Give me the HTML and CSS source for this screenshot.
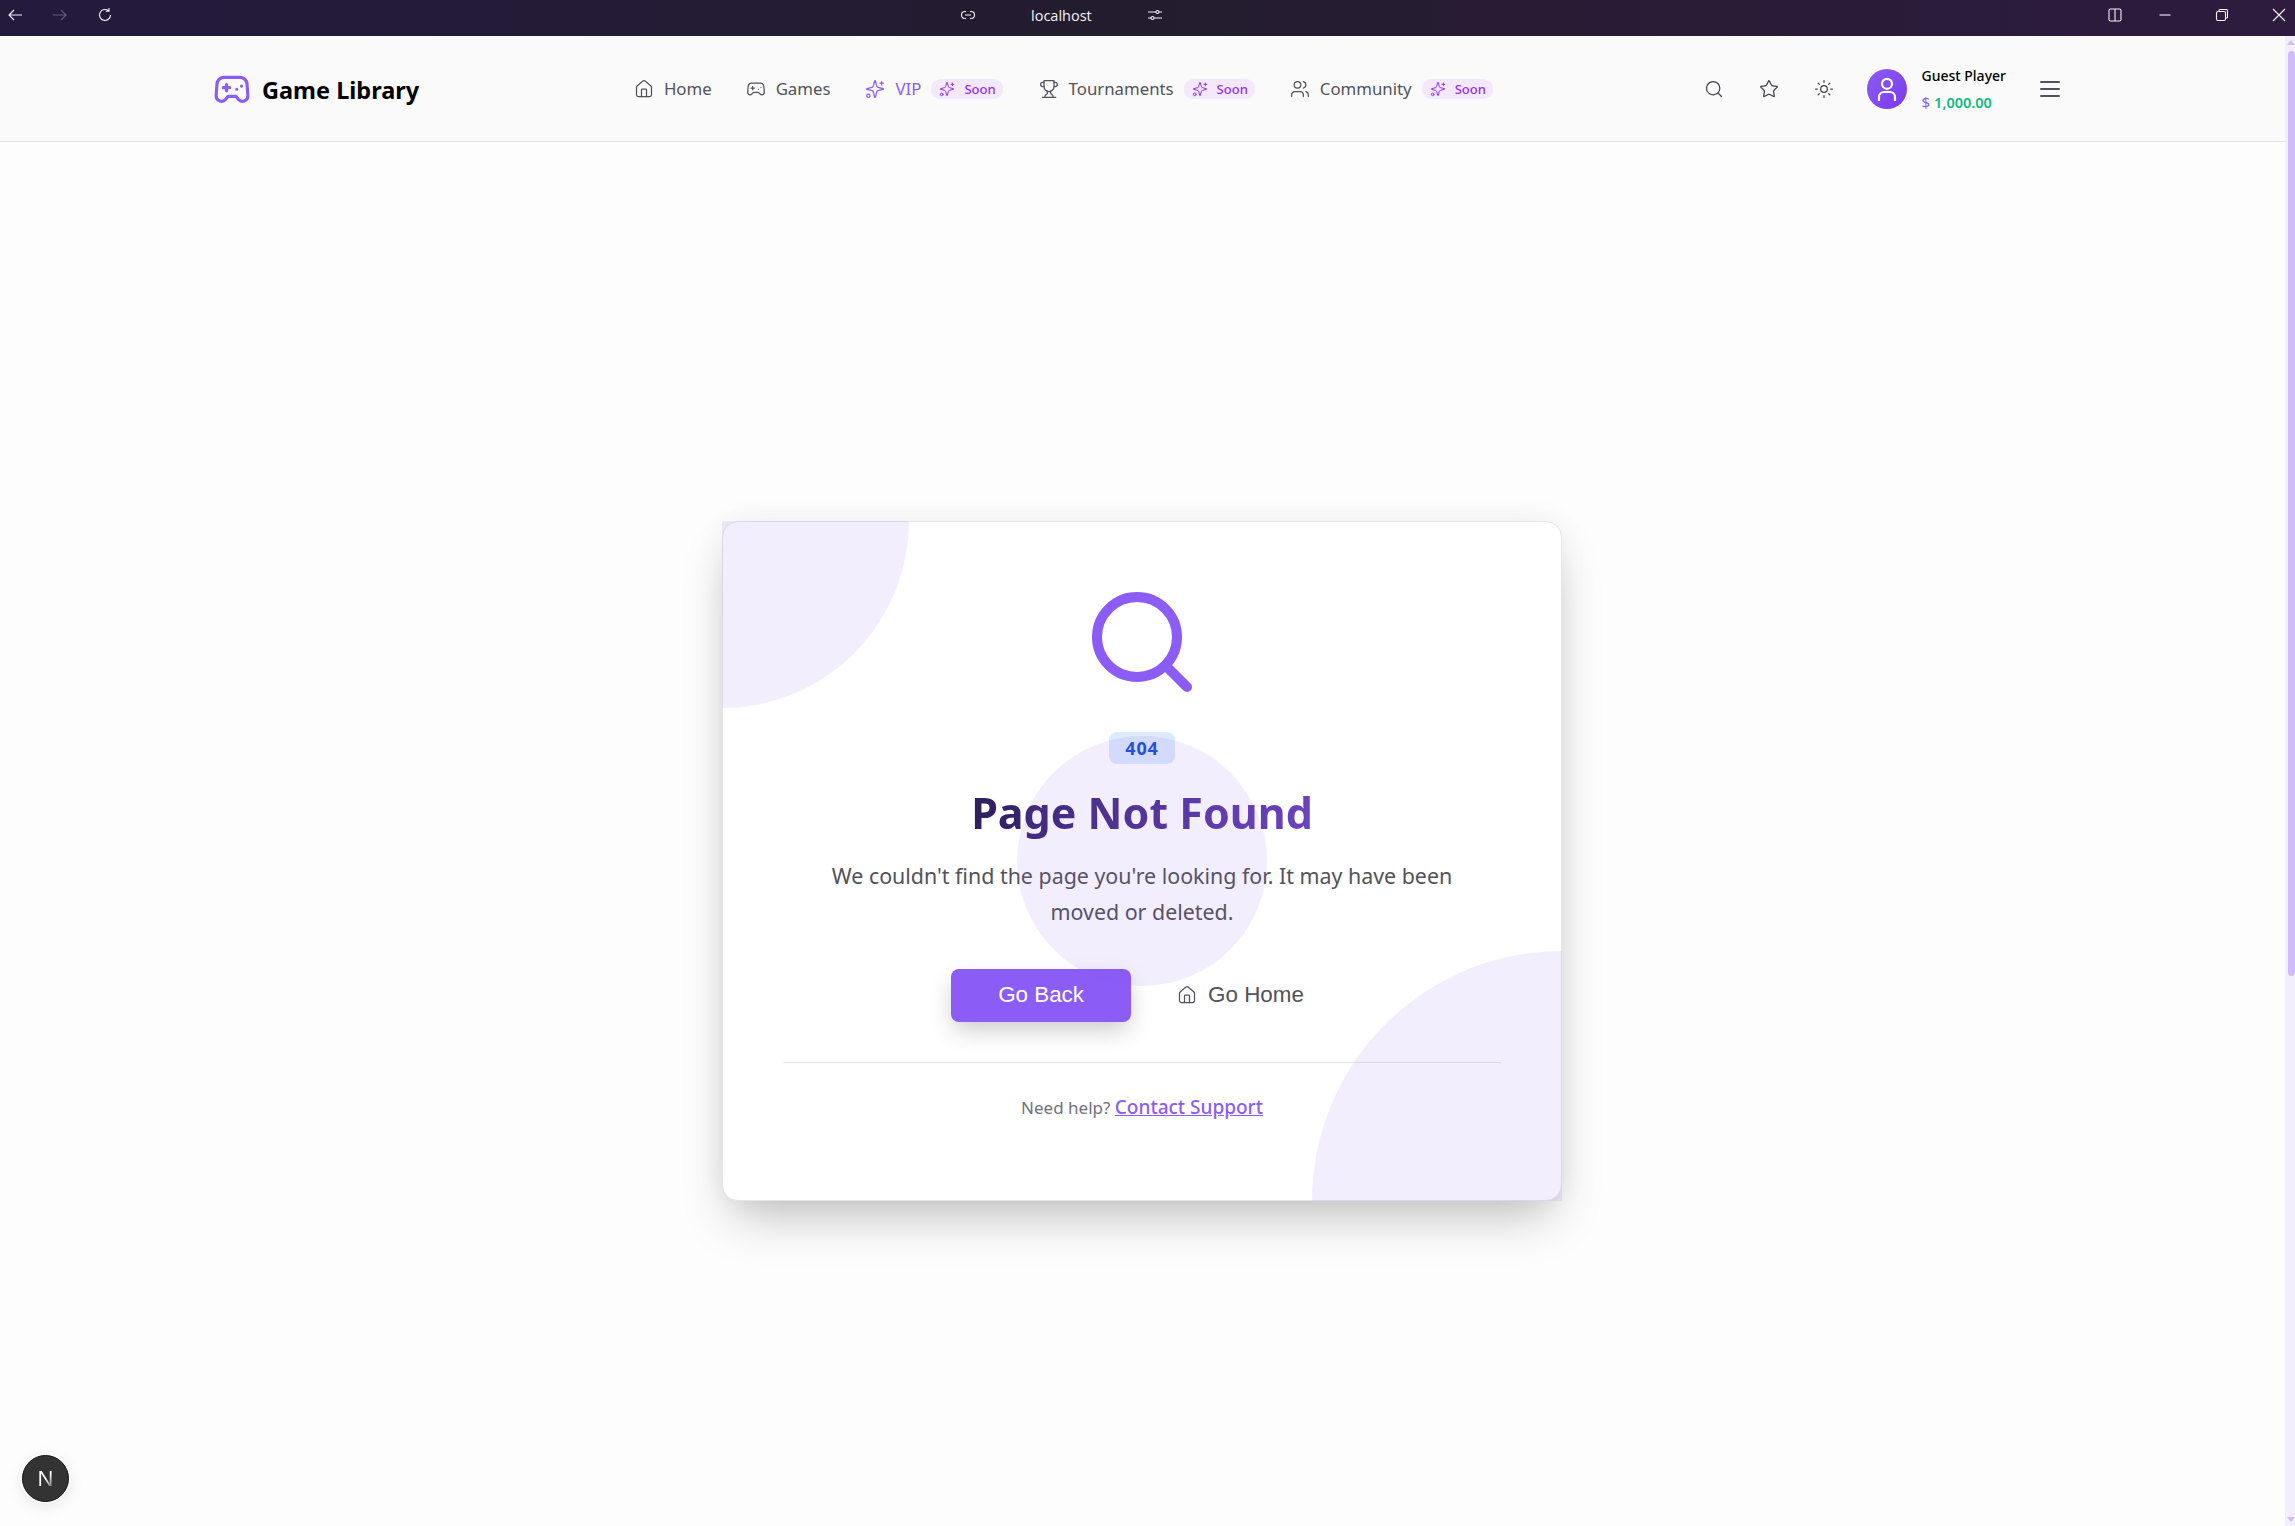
FILE: index.html
```html
<!DOCTYPE html>
<html lang="en">
<head>
    <meta charset="UTF-8">
    <meta name="viewport" content="width=device-width, initial-scale=1.0">
    <title>Page Not Found - Game Library</title>
    <link rel="stylesheet" href="styles.css">
</head>
<body>

    <!-- browser chrome -->
    <div class="titlebar">
        <div class="chrome-nav">
            <svg class="chrome-icon" viewBox="0 0 16 16"><path d="M15 8H2M7 3L2 8l5 5"/></svg>
            <svg class="chrome-icon dim" viewBox="0 0 16 16"><path d="M1 8h13M9 3l5 5-5 5"/></svg>
            <svg class="chrome-icon" viewBox="0 0 16 16"><path d="M13.5 8A5.5 5.5 0 1 1 11.6 3.8M12 1v3.2H8.8"/></svg>
        </div>
        <div class="chrome-address">
            <svg class="chrome-icon" viewBox="0 0 16 16"><path d="M6 4.500H5a3.500 3.500 0 0 0 0 7h1M10 4.500h1a3.500 3.500 0 0 1 0 7h-1M5 8h6"/></svg>
            <span class="chrome-url">localhost</span>
            <svg class="chrome-icon" viewBox="0 0 16 16"><path d="M1 5h8M12 5h3M1 11h3M7 11h8"/><circle cx="10.500" cy="5" r="1.500"/><circle cx="5.500" cy="11" r="1.500"/></svg>
        </div>
        <div class="chrome-window">
            <svg class="chrome-icon panel-icon" viewBox="0 0 16 16"><rect x="2" y="2" width="12" height="12" rx="1.500"/><path d="M8 2v12"/></svg>
            <svg class="chrome-icon" viewBox="0 0 16 16"><path d="M2.500 8h11"/></svg>
            <svg class="chrome-icon" viewBox="0 0 16 16"><rect x="2.500" y="4.500" width="9" height="9" rx="1.500"/><path d="M5 4.500V3.500a1 1 0 0 1 1-1h6.500a1 1 0 0 1 1 1V10a1 1 0 0 1-1 1h-1"/></svg>
            <svg class="chrome-icon" viewBox="0 0 16 16"><path d="M2 2l12 12M14 2L2 14"/></svg>
        </div>
    </div>

    <div class="viewport">
        <div class="page">
            <header class="site-header">
                <a class="logo">
                    <svg class="logo-icon" viewBox="0 0 24 24"><path d="M7 4h10a4.500 4.500 0 0 1 4.500 4.200l.5 7.300a3.400 3.400 0 0 1-6 2.400L14.500 16h-5L8 17.900a3.400 3.400 0 0 1-6-2.400l.5-7.300A4.500 4.500 0 0 1 7 4z"/><path d="M6.500 10.500h4M8.500 8.500v4M15 11.500h.01M18 9.500h.01"/></svg>
                    <span class="logo-text">Game Library</span>
                </a>

                <nav class="main-nav">
                    <a class="nav-item">
                        <svg class="icon" viewBox="0 0 24 24"><path d="M15 21v-8a1 1 0 0 0-1-1h-4a1 1 0 0 0-1 1v8"/><path d="M3 10a2 2 0 0 1 .709-1.528l7-5.999a2 2 0 0 1 2.582 0l7 5.999A2 2 0 0 1 21 10v9a2 2 0 0 1-2 2H5a2 2 0 0 1-2-2z"/></svg>
                        Home
                    </a>
                    <a class="nav-item">
                        <svg class="icon" viewBox="0 0 24 24"><path d="M6 11h4M8 9v4M15 12h.01M18 10h.01"/><path d="M17.320 5H6.680a4 4 0 0 0-3.978 3.590c-.006.052-.01.101-.017.152C2.604 9.416 2 14.456 2 16a3 3 0 0 0 3 3c1 0 1.500-.500 2-1l1.414-1.414A2 2 0 0 1 9.828 16h4.344a2 2 0 0 1 1.414.586L17 18c.500.500 1 1 2 1a3 3 0 0 0 3-3c0-1.545-.604-6.584-.685-7.258-.007-.05-.011-.1-.017-.151A4 4 0 0 0 17.320 5z"/></svg>
                        Games
                    </a>
                    <a class="nav-item vip">
                        <svg class="icon" viewBox="0 0 24 24"><path d="M9.937 15.500A2 2 0 0 0 8.500 14.063l-6.135-1.582a.5.5 0 0 1 0-.962L8.500 9.936A2 2 0 0 0 9.937 8.500l1.582-6.135a.5.5 0 0 1 .963 0L14.063 8.500A2 2 0 0 0 15.500 9.937l6.135 1.581a.5.5 0 0 1 0 .964L15.500 14.063a2 2 0 0 0-1.437 1.437l-1.582 6.135a.5.5 0 0 1-.963 0z"/><path d="M20 3v4M22 5h-4"/><circle cx="4" cy="20" r="2"/></svg>
                        VIP
                        <span class="soon-badge">
                            <svg class="icon-small" viewBox="0 0 24 24"><path d="M9.937 15.500A2 2 0 0 0 8.500 14.063l-6.135-1.582a.5.5 0 0 1 0-.962L8.500 9.936A2 2 0 0 0 9.937 8.500l1.582-6.135a.5.5 0 0 1 .963 0L14.063 8.500A2 2 0 0 0 15.500 9.937l6.135 1.581a.5.5 0 0 1 0 .964L15.500 14.063a2 2 0 0 0-1.437 1.437l-1.582 6.135a.5.5 0 0 1-.963 0z"/><path d="M20 3v4M22 5h-4"/><circle cx="4" cy="20" r="2"/></svg>
                            Soon
                        </span>
                    </a>
                    <a class="nav-item tournaments">
                        <svg class="icon" viewBox="0 0 24 24"><path d="M6 9H4.500a2.500 2.500 0 0 1 0-5H6"/><path d="M18 9h1.500a2.500 2.500 0 0 0 0-5H18"/><path d="M4 22h16"/><path d="M10 14.660V17c0 .55-.47.98-.97 1.210C7.850 18.750 7 20.240 7 22"/><path d="M14 14.660V17c0 .55.47.98.97 1.210C16.150 18.750 17 20.240 17 22"/><path d="M18 2H6v7a6 6 0 0 0 12 0V2Z"/></svg>
                        Tournaments
                        <span class="soon-badge">
                            <svg class="icon-small" viewBox="0 0 24 24"><path d="M9.937 15.500A2 2 0 0 0 8.500 14.063l-6.135-1.582a.5.5 0 0 1 0-.962L8.500 9.936A2 2 0 0 0 9.937 8.500l1.582-6.135a.5.5 0 0 1 .963 0L14.063 8.500A2 2 0 0 0 15.500 9.937l6.135 1.581a.5.5 0 0 1 0 .964L15.500 14.063a2 2 0 0 0-1.437 1.437l-1.582 6.135a.5.5 0 0 1-.963 0z"/><path d="M20 3v4M22 5h-4"/><circle cx="4" cy="20" r="2"/></svg>
                            Soon
                        </span>
                    </a>
                    <a class="nav-item">
                        <svg class="icon" viewBox="0 0 24 24"><path d="M16 21v-2a4 4 0 0 0-4-4H6a4 4 0 0 0-4 4v2"/><circle cx="9" cy="7" r="4"/><path d="M22 21v-2a4 4 0 0 0-3-3.870"/><path d="M16 3.130a4 4 0 0 1 0 7.750"/></svg>
                        Community
                        <span class="soon-badge">
                            <svg class="icon-small" viewBox="0 0 24 24"><path d="M9.937 15.500A2 2 0 0 0 8.500 14.063l-6.135-1.582a.5.5 0 0 1 0-.962L8.500 9.936A2 2 0 0 0 9.937 8.500l1.582-6.135a.5.5 0 0 1 .963 0L14.063 8.500A2 2 0 0 0 15.500 9.937l6.135 1.581a.5.5 0 0 1 0 .964L15.500 14.063a2 2 0 0 0-1.437 1.437l-1.582 6.135a.5.5 0 0 1-.963 0z"/><path d="M20 3v4M22 5h-4"/><circle cx="4" cy="20" r="2"/></svg>
                            Soon
                        </span>
                    </a>
                </nav>

                <div class="header-actions">
                    <svg class="icon" viewBox="0 0 24 24"><circle cx="11" cy="11" r="8"/><path d="M21 21l-4.300-4.300"/></svg>
                    <svg class="icon" viewBox="0 0 24 24"><path d="M11.525 2.295a.53.53 0 0 1 .95 0l2.310 4.679a2.123 2.123 0 0 0 1.595 1.160l5.166.756a.53.53 0 0 1 .294.904l-3.736 3.638a2.123 2.123 0 0 0-.611 1.878l.882 5.140a.53.53 0 0 1-.771.560l-4.618-2.428a2.122 2.122 0 0 0-1.973 0L6.396 21.010a.53.53 0 0 1-.77-.560l.881-5.139a2.122 2.122 0 0 0-.611-1.879L2.160 9.795a.53.53 0 0 1 .294-.906l5.165-.755a2.122 2.122 0 0 0 1.597-1.160z"/></svg>
                    <svg class="icon" viewBox="0 0 24 24"><circle cx="12" cy="12" r="4"/><path d="M12 2v2M12 20v2M4.930 4.930l1.410 1.410M17.660 17.660l1.410 1.410M2 12h2M20 12h2M6.340 17.660l-1.410 1.410M19.070 4.930l-1.410 1.410"/></svg>
                    <div class="user-box">
                        <div class="avatar">
                            <svg class="avatar-icon" viewBox="0 0 24 24"><circle cx="12" cy="6.800" r="5"/><path d="M4 23v-3a5 5 0 0 1 5-5h6a5 5 0 0 1 5 5v3"/></svg>
                        </div>
                        <div class="user-info">
                            <span class="user-name">Guest Player</span>
                            <span class="user-balance"><span class="currency">$</span>1,000.00</span>
                        </div>
                    </div>
                    <svg class="menu-icon" viewBox="0 0 24 24"><path d="M3 5h18M3 12h18M3 19h18"/></svg>
                </div>
            </header>

            <main class="main-area">
                <section class="not-found-card">
                    <div class="card-content">
                        <svg class="big-search" viewBox="0 0 24 24"><circle cx="11" cy="11" r="8"/><path d="M21 21l-4.300-4.300"/></svg>
                        <span class="error-badge">404</span>
                        <h1 class="error-title">Page Not Found</h1>
                        <p class="error-text">We couldn't find the page you're looking for. It may have been moved or deleted.</p>
                        <div class="error-actions">
                            <button class="btn-primary" type="button">Go Back</button>
                            <button class="btn-ghost" type="button">
                                <svg class="icon" viewBox="0 0 24 24"><path d="M15 21v-8a1 1 0 0 0-1-1h-4a1 1 0 0 0-1 1v8"/><path d="M3 10a2 2 0 0 1 .709-1.528l7-5.999a2 2 0 0 1 2.582 0l7 5.999A2 2 0 0 1 21 10v9a2 2 0 0 1-2 2H5a2 2 0 0 1-2-2z"/></svg>
                                Go Home
                            </button>
                        </div>
                        <div class="help-row">Need help? <a class="help-link">Contact Support</a></div>
                    </div>
                    <div class="blob-layer">
                        <div class="blob blob-top"></div>
                        <div class="blob blob-middle"></div>
                        <div class="blob blob-bottom"></div>
                    </div>
                </section>
            </main>
        </div>

        <div class="scrollbar">
            <div class="scroll-arrow-up"></div>
            <div class="scroll-thumb"></div>
            <div class="scroll-arrow-down"></div>
        </div>
    </div>

    <div class="dev-indicator"><span class="dev-letter">N</span></div>

</body>
</html>
```

FILE: styles.css
```css
* {
    box-sizing: border-box;
}

body {
    margin: 0;
    height: 1526px;
    overflow: hidden;
    font-family: "Noto Sans", "Open Sans", sans-serif;
    background-color: #fdfdfd;
    display: flex;
    flex-direction: column;
}

/* browser chrome */
.titlebar {
    height: 36px;
    flex-shrink: 0;
    display: flex;
    align-items: center;
    padding: 0 8px 6px 7px;
    background: linear-gradient(90deg, #241a3e 0%, #231c2e 50%, #2e1b3f 100%);
    color: #f4f2f8;
}

.chrome-nav {
    width: 953px;
    display: flex;
    gap: 29px;
}

.chrome-address {
    display: flex;
    align-items: center;
    gap: 55px;
}

.chrome-url {
    font-size: 14.500px;
    font-family: "Open Sans", sans-serif;
}

.chrome-window {
    margin-left: auto;
    display: flex;
    gap: 41px;
}

.chrome-icon {
    width: 16px;
    height: 16px;
    fill: none;
    stroke: currentColor;
    stroke-width: 1.100;
}

.chrome-icon.dim {
    opacity: 0.3;
}

.panel-icon {
    margin-right: -7px;
}

.viewport {
    flex: 1;
    display: flex;
    min-height: 0;
}

.page {
    flex: 1;
    min-width: 0;
    overflow: hidden;
}

/* fake scrollbar */
.scrollbar {
    width: 10px;
    flex-shrink: 0;
    background-color: #f3eefe;
    display: flex;
    flex-direction: column;
    align-items: flex-end;
    padding: 4px 0 4px;
}

.scroll-thumb {
    width: 7px;
    height: 925px;
    margin: 6px 0 auto;
    border-radius: 4px 4px 4px 4px;
    background-color: #d0bcfb;
}

.scroll-arrow-up {
    width: 0;
    height: 0;
    border-left: 4px solid transparent;
    border-right: 4px solid transparent;
    border-bottom: 5px solid #d0bcfb;
}

.scroll-arrow-down {
    width: 0;
    height: 0;
    border-left: 4px solid transparent;
    border-right: 4px solid transparent;
    border-top: 5px solid #d0bcfb;
}

/* header */
.site-header {
    height: 106px;
    padding: 0 223px 0 213px;
    display: flex;
    align-items: center;
    justify-content: space-between;
    background-color: #fafafa;
    border-bottom: 1px solid #e4e4e7;
}

.logo {
    display: flex;
    align-items: center;
    gap: 11px;
    padding-top: 2px;
}

.logo-icon {
    width: 38px;
    height: 38px;
    fill: none;
    stroke: #8b5cf6;
    stroke-width: 2;
    stroke-linecap: round;
    stroke-linejoin: round;
}

.logo-text {
    font-size: 23.500px;
    font-weight: 700;
    color: #000;
}

.main-nav {
    display: flex;
    align-items: center;
    gap: 34px;
    margin-right: -4px;
}

.nav-item {
    display: flex;
    align-items: center;
    gap: 10px;
    font-size: 16.800px;
    color: #52525b;
}

.nav-item.vip {
    margin-left: 1px;
    margin-right: 2px;
    color: #8b5cf6;
}

.nav-item.tournaments {
    margin-right: 1px;
}

.icon {
    width: 20px;
    height: 20px;
    flex-shrink: 0;
    fill: none;
    stroke: currentColor;
    stroke-width: 1.500;
    stroke-linecap: round;
    stroke-linejoin: round;
}

.icon-small {
    width: 16px;
    height: 16px;
    fill: none;
    stroke: currentColor;
    stroke-width: 1.500;
    stroke-linecap: round;
    stroke-linejoin: round;
}

.soon-badge {
    display: flex;
    align-items: center;
    gap: 9px;
    height: 20px;
    padding: 0 7px 0 8px;
    border-radius: 9px;
    background-color: #f3e8ff;
    color: #9333ea;
    font-size: 13px;
    font-weight: 500;
}

.header-actions {
    display: flex;
    align-items: center;
    gap: 35px;
    color: #3f3f46;
}

.user-box {
    display: flex;
    align-items: center;
    gap: 15px;
    margin-left: -2px;
}

.avatar {
    width: 40px;
    height: 40px;
    border-radius: 50%;
    background: linear-gradient(135deg, #8b5cf6, #7c3aed);
    display: flex;
    align-items: center;
    justify-content: center;
}

.avatar-icon {
    width: 24px;
    height: 24px;
    fill: none;
    stroke: #fff;
    stroke-width: 2.200;
    stroke-linecap: round;
}

.user-info {
    display: flex;
    flex-direction: column;
    gap: 6px;
    line-height: 21px;
}

.user-name {
    font-size: 14px;
    font-weight: 500;
    color: #000;
}

.user-balance {
    font-size: 14.500px;
    font-weight: 600;
    color: #10b981;
}

.currency {
    margin-right: 4px;
    font-size: 15px;
    font-weight: 400;
    color: #8b5cf6;
}

.menu-icon {
    width: 24px;
    height: 24px;
    margin-left: -3px;
    fill: none;
    stroke: #52525b;
    stroke-width: 2;
    stroke-linecap: round;
}

/* 404 card */
.main-area {
    height: 1437px;
    padding-right: 1px;
    display: flex;
    align-items: center;
    justify-content: center;
}

.not-found-card {
    position: relative;
    width: 840px;
    height: 680px;
    border: 1px solid #e6e4ec;
    border-radius: 16px;
    background-color: #fff;
    box-shadow: 0 25px 50px -12px rgba(0, 0, 0, 0.25), 0 0 30px rgba(0, 0, 0, 0.05);
}

.card-content {
    display: flex;
    flex-direction: column;
    align-items: center;
    padding: 60px 60px 0;
}

.big-search {
    width: 120px;
    height: 120px;
    fill: none;
    stroke: #8b5cf6;
    stroke-width: 2;
    stroke-linecap: round;
    stroke-linejoin: round;
}

.error-badge {
    margin-top: 30px;
    padding: 0 16px;
    height: 32px;
    line-height: 32px;
    border-radius: 8px;
    background-color: #dbeafe;
    color: #1d4ed8;
    font-size: 18px;
    font-weight: 700;
    letter-spacing: 0.800px;
}

.error-title {
    margin: 21px 0 0;
    font-size: 43px;
    line-height: 56px;
    font-weight: 700;
    background: linear-gradient(90deg, #2e1f5e, #6d44c0);
    -webkit-background-clip: text;
    background-clip: text;
    color: transparent;
}

.error-text {
    max-width: 640px;
    margin: 17px 0 0;
    font-size: 21.400px;
    line-height: 36px;
    text-align: center;
    color: #52525b;
}

.error-actions {
    display: flex;
    align-items: center;
    gap: 16px;
    margin-top: 39px;
    margin-left: 1px;
}

.btn-primary,
.btn-ghost {
    height: 53px;
    border: none;
    border-radius: 8px;
    font-family: "Liberation Sans", Arial, sans-serif;
    font-size: 22.400px;
}

.btn-primary {
    width: 180px;
    background-color: #8b5cf6;
    color: #fff;
    box-shadow: 0 10px 25px -3px rgba(0, 0, 0, 0.22);
}

.btn-ghost {
    display: flex;
    align-items: center;
    gap: 11px;
    padding: 0 30px;
    background: none;
    color: #52525b;
}

.help-row {
    width: 100%;
    margin-top: 40px;
    padding-top: 31px;
    border-top: 1px solid #e4e4e7;
    text-align: center;
    font-size: 17px;
    color: #71717a;
}

.help-link {
    color: #8b5cf6;
    font-size: 19px;
    font-weight: 500;
    text-decoration: underline;
}

/* decorative circles sit over the content, square clip so corners poke out */
.blob-layer {
    position: absolute;
    inset: -1px;
    overflow: hidden;
    pointer-events: none;
}

.blob {
    position: absolute;
    border-radius: 50%;
    background-color: rgba(139, 92, 246, 0.1);
}

.blob-top {
    width: 374px;
    height: 374px;
    left: -187px;
    top: -187px;
}

.blob-middle {
    width: 250px;
    height: 250px;
    left: 295px;
    top: 215px;
}

.blob-bottom {
    width: 500px;
    height: 500px;
    right: -250px;
    bottom: -250px;
}

.dev-indicator {
    position: fixed;
    left: 22px;
    top: 1455px;
    width: 47px;
    height: 47px;
    border-radius: 50%;
    border: 1px solid #111;
    background-color: #333;
    text-align: center;
    line-height: 45px;
    box-shadow: 0 0 0 1px #fff, 0 4px 16px rgba(0, 0, 0, 0.1);
}

.dev-letter {
    font-family: "Liberation Sans", Arial, sans-serif;
    font-size: 22px;
    background: linear-gradient(135deg, #fff 50%, #666 90%);
    -webkit-background-clip: text;
    background-clip: text;
    color: transparent;
}
```
